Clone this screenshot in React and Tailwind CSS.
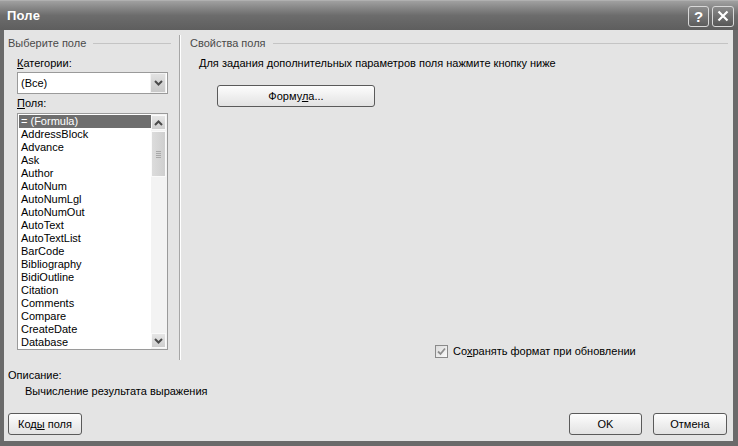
import React from "react";

const FONT = "font-['Liberation_Sans',Arial,sans-serif]";

const fields = [
  "= (Formula)",
  "AddressBlock",
  "Advance",
  "Ask",
  "Author",
  "AutoNum",
  "AutoNumLgl",
  "AutoNumOut",
  "AutoText",
  "AutoTextList",
  "BarCode",
  "Bibliography",
  "BidiOutline",
  "Citation",
  "Comments",
  "Compare",
  "CreateDate",
  "Database",
];

const Chevron = ({ up }) => (
  <svg width="9" height="6" viewBox="0 0 9 6">
    <path
      d={up ? "M1 5 L4.5 1.5 L8 5" : "M1 1 L4.5 4.5 L8 1"}
      fill="none"
      stroke="#4a4a4a"
      strokeWidth="2"
    />
  </svg>
);

const Button = ({ className = "", children }) => (
  <button
    className={`h-[22px] rounded-[3px] border border-[#5a5a5a] bg-gradient-to-b from-[#fdfdfd] to-[#e2e2e2] text-[11px] text-black leading-none ${className}`}
  >
    {children}
  </button>
);

const GroupLabel = ({ text, className = "" }) => (
  <div className={`flex items-center h-[13px] ${className}`}>
    <span className="text-[#4a4a4a] whitespace-nowrap">{text}</span>
    <div className="flex-1 h-px bg-[#c4c4c4] ml-[7px]" />
  </div>
);

export default function App() {
  return (
    <div
      className={`w-[738px] h-[446px] flex flex-col bg-[#6a6a6a] ${FONT} text-[11px] leading-[13px] text-black select-none`}
    >
      {/* title bar */}
      <div className="h-[30px] flex items-center justify-between px-[4px] bg-gradient-to-b from-[#a0a0a0] via-[#6c6c6c] to-[#5e5e5e] border-t border-[#b0b0b0]">
        <span className="ml-[3px] text-white font-bold text-[13px] tracking-[0.2px]">
          Поле
        </span>
        <div className="flex gap-[3px] mr-[0px] mt-[1px]">
          <div className="w-[21px] h-[21px] rounded-[3px] border border-[#d8d8d8] bg-gradient-to-b from-[#8c8c8c] to-[#5c5c5c] flex items-center justify-center text-white font-bold text-[15px]">
            ?
          </div>
          <div className="w-[22px] h-[21px] rounded-[3px] border border-[#d8d8d8] bg-gradient-to-b from-[#8a8a8a] to-[#575757] flex items-center justify-center">
            <svg width="12" height="12" viewBox="0 0 12 12">
              <path d="M1.5 1.5 L10.5 10.5 M10.5 1.5 L1.5 10.5" stroke="#fff" strokeWidth="2.2" />
            </svg>
          </div>
        </div>
      </div>

      {/* client area */}
      <div className="flex-1 flex flex-col ml-[4px] mr-[5px] mb-[5px] bg-[#e4e4e4]">
        <div className="h-[332px] flex">
          {/* left: field picker */}
          <div className="w-[175px] flex flex-col pt-[7px]">
            <GroupLabel text="Выберите поле" className="pl-[4px] mr-[8px]" />
            <div className="mt-[7px] pl-[13px] h-[13px]">
              <span className="underline">К</span>атегории:
            </div>
            <div className="mt-[2px] ml-[13px] w-[151px] h-[22px] border border-[#9a9a9a] bg-white flex items-center">
              <span className="pl-[3px] flex-1">(Все)</span>
              <div className="w-[16px] h-[20px] mr-[1px] bg-gradient-to-b from-[#e2e2e2] to-[#c8c8c8] border border-[#f2f2f2] flex items-center justify-center">
                <Chevron />
              </div>
            </div>
            <div className="mt-[3px] pl-[13px] h-[13px]">
              <span className="underline">П</span>оля:
            </div>
            <div className="mt-[3px] ml-[13px] w-[151px] h-[237px] border border-[#9a9a9a] bg-white flex">
              <div className="flex-1 pl-[1px] pt-[1px] overflow-hidden">
                {fields.map((f, i) => (
                  <div
                    key={f}
                    className={`h-[13px] pl-[2px] whitespace-nowrap ${
                      i === 0 ? "bg-[#6e6e6e] text-white" : ""
                    }`}
                  >
                    {f}
                  </div>
                ))}
              </div>
              {/* scrollbar */}
              <div className="w-[16px] flex flex-col bg-[#f3f3f3] py-[1px] pr-[1px]">
                <div className="h-[15px] border border-[#fafafa] bg-gradient-to-b from-[#e6e6e6] to-[#cecece] flex items-center justify-center">
                  <Chevron up />
                </div>
                <div className="h-[46px] mt-[1px] border border-[#fafafa] bg-gradient-to-r from-[#dcdcdc] to-[#cfcfcf] flex flex-col items-center justify-center gap-[1px]">
                  <div className="w-[5px] h-px bg-[#a8a8a8]" />
                  <div className="w-[5px] h-px bg-[#a8a8a8]" />
                  <div className="w-[5px] h-px bg-[#a8a8a8]" />
                  <div className="w-[5px] h-px bg-[#a8a8a8]" />
                </div>
                <div className="flex-1" />
                <div className="h-[15px] border border-[#fafafa] bg-gradient-to-b from-[#e6e6e6] to-[#cecece] flex items-center justify-center">
                  <Chevron />
                </div>
              </div>
            </div>
          </div>

          {/* etched divider */}
          <div className="w-[2px] flex mt-[5px] mb-[2px]">
            <div className="w-px bg-[#a6a6a6]" />
            <div className="w-px bg-white" />
          </div>

          {/* right: field properties */}
          <div className="flex-1 flex flex-col pt-[7px] pl-[9px]">
            <GroupLabel text="Свойства поля" className="mr-[5px]" />
            <div className="mt-[7px] pl-[9px] h-[13px] whitespace-nowrap">
              Для задания дополнительных параметров поля нажмите кнопку ниже
            </div>
            <Button className="mt-[15px] ml-[27px] w-[158px]">
              Форму<span className="underline">л</span>а...
            </Button>
            <div className="mt-auto mb-[4px] ml-[245px] flex items-center gap-[5px]">
              <div className="w-[13px] h-[13px] border border-[#8a8a8a] bg-gradient-to-br from-[#dcdcdc] to-[#fafafa] flex items-center justify-center">
                <svg width="9" height="9" viewBox="0 0 9 9">
                  <path d="M1 4.5 L3.5 7 L8 1.5" fill="none" stroke="#8e8e8e" strokeWidth="1.8" />
                </svg>
              </div>
              <span>
                Со<span className="underline">х</span>ранять формат при обновлении
              </span>
            </div>
          </div>
        </div>

        <div className="mt-[7px] pl-[4px] h-[13px]">Описание:</div>
        <div className="mt-[3px] pl-[21px] h-[13px]">Вычисление результата выражения</div>

        <div className="mt-[15px] flex items-center px-[4px] pr-[6px]">
          <Button className="w-[74px]">
            Код<span className="underline">ы</span> поля
          </Button>
          <div className="flex-1" />
          <Button className="w-[73px]">OK</Button>
          <Button className="w-[74px] ml-[11px]">Отмена</Button>
        </div>
      </div>
    </div>
  );
}
